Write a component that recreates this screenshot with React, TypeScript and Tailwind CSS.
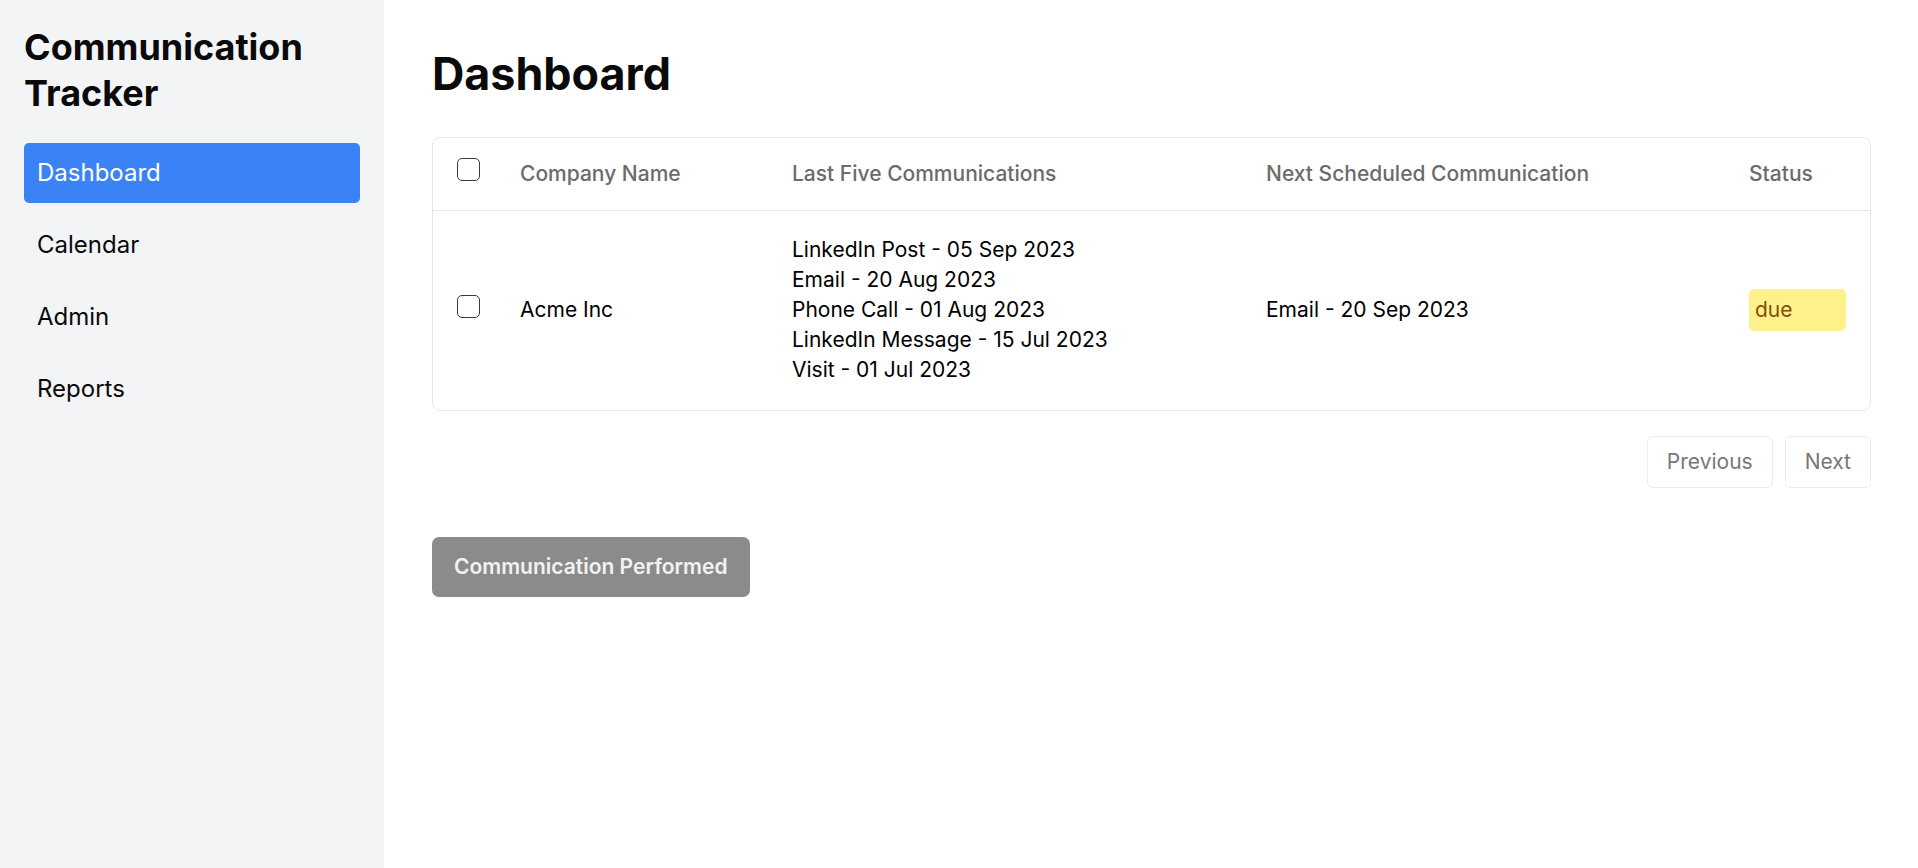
import { useState } from "react";

const navItems = ["Dashboard", "Calendar", "Admin", "Reports"];

const rows = [
  {
    company: "Acme Inc",
    last: [
      "LinkedIn Post - 05 Sep 2023",
      "Email - 20 Aug 2023",
      "Phone Call - 01 Aug 2023",
      "LinkedIn Message - 15 Jul 2023",
      "Visit - 01 Jul 2023",
    ],
    next: "Email - 20 Sep 2023",
    status: "due",
  },
];

function Checkbox() {
  return (
    <input
      type="checkbox"
      className="block appearance-none w-[23px] h-[23px] border-[1.5px] border-[#3a3a3a] rounded-[5px] bg-white mb-[9px]"
    />
  );
}

export default function App() {
  const [active, setActive] = useState("Dashboard");

  return (
    <div className="flex min-h-screen font-[Inter,sans-serif] text-black bg-white">
      {/* Sidebar */}
      <aside className="w-[384px] shrink-0 bg-gray-100 p-6">
        <h2 className="text-[36px] leading-[46px] font-bold text-[#0a0a0a] mb-[27px]">
          Communication Tracker
        </h2>
        <ul className="flex flex-col gap-3">
          {navItems.map((item) => (
            <li key={item}>
              <button
                onClick={() => setActive(item)}
                className={`w-full h-[60px] flex items-center px-[13px] rounded-[5px] text-[24px] ${
                  active === item ? "bg-[#3b82f6] text-white" : "text-[#0a0a0a]"
                }`}
              >
                {item}
              </button>
            </li>
          ))}
        </ul>
      </aside>

      {/* Main */}
      <main className="flex-1 pl-12 pr-[47px] pt-12 text-[21px] leading-[30px]">
        <h1 className="text-[44.8px] leading-[52px] font-bold text-[#0a0a0a] mb-[37px]">Dashboard</h1>

        <div className="border border-gray-200 rounded-[8px] overflow-hidden">
          <table className="w-full table-fixed text-left">
            <colgroup>
              <col className="w-[63px]" />
              <col className="w-[272px]" />
              <col className="w-[474px]" />
              <col className="w-[483px]" />
              <col />
            </colgroup>
            <thead>
              <tr className="border-b border-gray-200">
                <th className="pl-6 align-middle">
                  <Checkbox />
                </th>
                <th className="px-6 py-[21px] font-medium text-[#6b6b6b]">Company Name</th>
                <th className="px-6 py-[21px] font-medium text-[#6b6b6b]">Last Five Communications</th>
                <th className="px-6 py-[21px] font-medium text-[#6b6b6b]">Next Scheduled Communication</th>
                <th className="px-6 py-[21px] font-medium text-[#6b6b6b]">Status</th>
              </tr>
            </thead>
            <tbody>
              {rows.map((r) => (
                <tr key={r.company}>
                  <td className="pl-6 align-middle">
                    <Checkbox />
                  </td>
                  <td className="px-6 pt-6 pb-[25px] align-middle">{r.company}</td>
                  <td className="px-6 pt-6 pb-[25px] align-middle">
                    {r.last.map((l) => (
                      <div key={l}>{l}</div>
                    ))}
                  </td>
                  <td className="px-6 pt-6 pb-[25px] align-middle">{r.next}</td>
                  <td className="px-6 pt-6 pb-[25px] align-middle">
                    <span className="block bg-[#fef08a] text-[#854d0e] rounded-[5px] px-[6px] py-[6px]">
                      {r.status}
                    </span>
                  </td>
                </tr>
              ))}
            </tbody>
          </table>
        </div>

        <div className="flex justify-end gap-3 mt-[25px]">
          <button className="border border-[#ececec] rounded-[6px] px-[19px] py-[10px] text-[#777777]">
            Previous
          </button>
          <button className="border border-[#ececec] rounded-[6px] px-[19px] py-[10px] text-[#777777]">
            Next
          </button>
        </div>

        <button className="mt-[49px] bg-[#8b8b8b] text-[#f2f2f2] font-semibold rounded-[7px] px-[22px] py-[15px]">
          Communication Performed
        </button>
      </main>
    </div>
  );
}
